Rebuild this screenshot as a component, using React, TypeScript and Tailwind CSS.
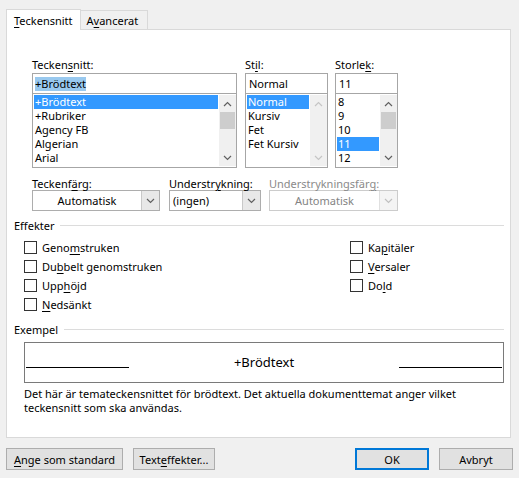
import React from "react";

const U = ({ c }: { c: string }) => <span className="underline underline-offset-[2px]">{c}</span>;

function Chevron({ up, color }: { up?: boolean; color: string }) {
  return (
    <svg width="9" height="6" viewBox="0 0 9 6">
      <path d={up ? "M1 5 L4.5 1.5 L8 5" : "M1 1 L4.5 4.5 L8 1"} fill="none" stroke={color} strokeWidth="1.2" />
    </svg>
  );
}

function ScrollBar({ disabled }: { disabled?: boolean }) {
  const col = disabled ? "#c5c5c5" : "#606060";
  return (
    <div className="w-[17px] h-full bg-[#f0f0f0] flex flex-col">
      <div className="h-[17px] flex items-center justify-center">
        <Chevron up color={col} />
      </div>
      <div className="flex-1 px-[1px]">
        {!disabled && <div className="h-[17px] bg-[#cdcdcd]" />}
      </div>
      <div className="h-[17px] flex items-center justify-center">
        <Chevron color={col} />
      </div>
    </div>
  );
}

function ListBox({ items, sel, disabledScroll }: { items: string[]; sel: number; disabledScroll?: boolean }) {
  return (
    <div className="h-[75px] border border-[#a6a6a6] bg-white flex p-[1px] pr-0">
      <div className="flex-1 flex flex-col overflow-hidden">
        {items.map((it, i) => (
          <div
            key={i}
            className={`h-[14px] leading-[14px] pl-[1px] mr-[1px] whitespace-nowrap ${i === sel ? "bg-[#3399ff] text-white" : "text-black"}`}
          >
            {it}
          </div>
        ))}
      </div>
      <ScrollBar disabled={disabledScroll} />
    </div>
  );
}

function Combo({ w, text, center, disabled }: { w: string; text: string; center?: boolean; disabled?: boolean }) {
  return (
    <div className={`${w} h-[21px] border ${disabled ? "border-[#cccccc]" : "border-[#adadad]"} bg-white flex`}>
      <div className={`flex-1 flex items-center ${center ? "justify-center" : "pl-[3px]"} ${disabled ? "text-[#838383]" : "text-black"}`}>
        {text}
      </div>
      <div className={`w-[18px] border-l ${disabled ? "border-[#e0e0e0] bg-[#f4f4f4]" : "border-[#c8c8c8] bg-[#e8e8e8]"} flex items-center justify-center`}>
        <Chevron color={disabled ? "#c0c0c0" : "#606060"} />
      </div>
    </div>
  );
}

function Check({ children }: { children: React.ReactNode }) {
  return (
    <div className="h-[19px] flex items-center">
      <div className="w-[13px] h-[13px] border border-[#333333] bg-white" />
      <div className="ml-[5px]">{children}</div>
    </div>
  );
}

function Legend({ children }: { children: React.ReactNode }) {
  return (
    <div className="flex items-center h-[15px]">
      <span>{children}</span>
      <div className="flex-1 ml-[6px] h-px bg-[#dcdcdc]" />
    </div>
  );
}

function Btn({ w, children, primary }: { w: string; children: React.ReactNode; primary?: boolean }) {
  return (
    <div
      className={`${w} h-[22px] flex items-center justify-center bg-[#e1e1e1] ${primary ? "border-2 border-[#0078d7]" : "border border-[#adadad]"}`}
    >
      {children}
    </div>
  );
}

export default function App() {
  return (
    <div
      className="w-[519px] h-[478px] bg-[#f0f0f0] text-[11px] leading-[15px] text-black overflow-hidden"
      style={{ fontFamily: '"Noto Sans", "Open Sans", sans-serif' }}
    >
      {/* tabs */}
      <div className="flex items-end pt-[8px] pl-[6px] h-[29px]">
        <div className="relative z-10 h-[21px] -mb-px pl-[7px] pr-[7px] bg-white border border-b-0 border-[#d9d9d9] flex items-center">
          <span>
            <U c="T" />eckensnitt
          </span>
        </div>
        <div className="h-[19px] pl-[6px] pr-[9px] bg-[#f0f0f0] border border-l-0 border-b-0 border-[#d9d9d9] flex items-center">
          <span>
            A<U c="v" />ancerat
          </span>
        </div>
      </div>
      {/* panel */}
      <div className="mx-[6px] w-[505px] h-[409px] bg-white border border-[#d9d9d9] pt-[27px] pl-[25px] pr-[6px]">
        <div className="flex">
          <div className="w-[205px]">
            <div className="h-[16px]">
              Tecken<U c="s" />nitt:
            </div>
            <div className="h-[20px] border border-[#a6a6a6] border-b-0 flex items-center pl-[2px]">
              <span className="bg-[#99c9ef] leading-[14px]">+Brödtext</span>
            </div>
            <ListBox items={["+Brödtext", "+Rubriker", "Agency FB", "Algerian", "Arial"]} sel={0} />
          </div>
          <div className="w-[83px] ml-[8px]">
            <div className="h-[16px]">
              St<U c="i" />l:
            </div>
            <div className="h-[20px] border border-[#a6a6a6] border-b-0 flex items-center pl-[3px]">Normal</div>
            <ListBox items={["Normal", "Kursiv", "Fet", "Fet Kursiv"]} sel={0} disabledScroll />
          </div>
          <div className="w-[63px] ml-[7px]">
            <div className="h-[16px]">
              Storle<U c="k" />:
            </div>
            <div className="h-[20px] border border-[#a6a6a6] border-b-0 flex items-center pl-[3px]">11</div>
            <ListBox items={["8", "9", "10", "11", "12"]} sel={3} />
          </div>
        </div>

        <div className="flex mt-[8px]">
          <div className="w-[128px]">
            <div className="h-[15px] mb-[-1px]">
              Teckenf<U c="ä" />rg:
            </div>
            <Combo w="w-[128px]" text="Automatisk" center />
          </div>
          <div className="w-[92px] ml-[9px]">
            <div className="h-[15px] mb-[-1px]">
              Understr<U c="y" />kning:
            </div>
            <Combo w="w-[92px]" text="(ingen)" />
          </div>
          <div className="w-[129px] ml-[8px]">
            <div className="h-[15px] mb-[-1px] text-[#8a8a8a]">
              Understrykningsfär<U c="g" />:
            </div>
            <Combo w="w-[129px]" text="Automatisk" center disabled />
          </div>
        </div>

        <div className="-ml-[18px] mt-[7px]">
          <Legend>Effekter</Legend>
        </div>
        <div className="-ml-[8px] mt-[5px] flex">
          <div className="w-[326px]">
            <Check>
              Geno<U c="m" />struken
            </Check>
            <Check>
              Du<U c="b" />belt genomstruken
            </Check>
            <Check>
              Upp<U c="h" />öjd
            </Check>
            <Check>
              <U c="N" />edsänkt
            </Check>
          </div>
          <div>
            <Check>
              Ka<U c="p" />itäler
            </Check>
            <Check>
              <U c="V" />ersaler
            </Check>
            <Check>
              Do<U c="l" />d
            </Check>
          </div>
        </div>

        <div className="-ml-[18px] mt-[8px]">
          <Legend>Exempel</Legend>
        </div>
        <div className="-ml-[8px] mt-[5px] w-[480px] h-[41px] border border-[#7a7a7a] flex items-center px-[1px]">
          <div className="w-[103px] h-px bg-black mt-[9px]" />
          <div className="flex-1 text-center text-[13px] leading-[18px] -mt-[2px]">+Brödtext</div>
          <div className="w-[103px] h-px bg-black mt-[9px]" />
        </div>
        <div className="-ml-[8px] mt-[4px] leading-[14px]">
          Det här är temateckensnittet för brödtext. Det aktuella dokumenttemat anger vilket
          <br />
          teckensnitt som ska användas.
        </div>
      </div>
      {/* buttons */}
      <div className="flex mt-[10px] px-[6px]">
        <Btn w="w-[117px]">
          <span>
            <U c="A" />nge som standard
          </span>
        </Btn>
        <div className="ml-[10px]">
          <Btn w="w-[82px]">
            <span>
              Text<U c="e" />ffekter...
            </span>
          </Btn>
        </div>
        <div className="ml-auto">
          <Btn w="w-[74px]" primary>
            OK
          </Btn>
        </div>
        <div className="ml-[10px]">
          <Btn w="w-[74px]">Avbryt</Btn>
        </div>
      </div>
    </div>
  );
}
